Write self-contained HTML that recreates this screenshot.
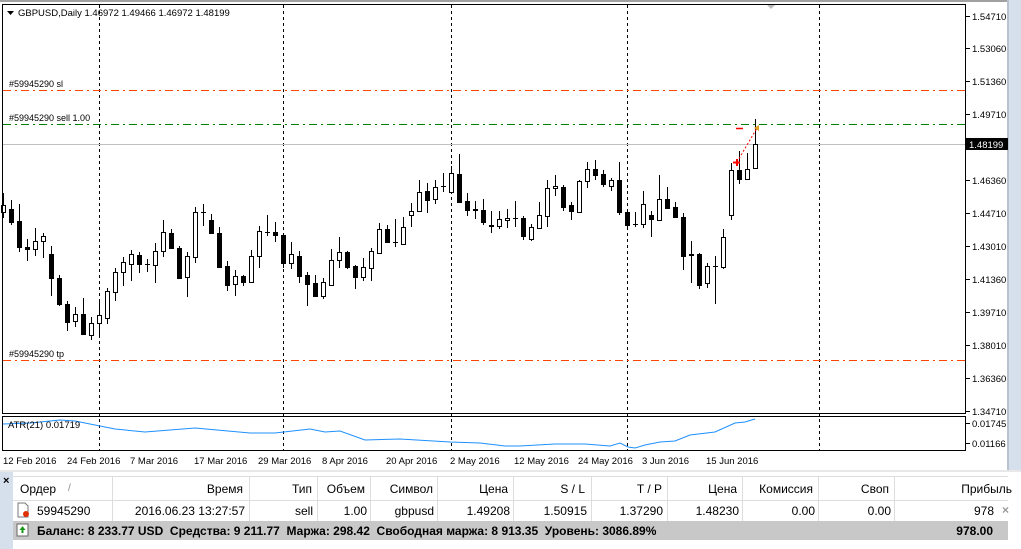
<!DOCTYPE html>
<html><head><meta charset="utf-8"><style>
*{margin:0;padding:0;box-sizing:border-box}
body{width:1021px;height:549px;background:#fff;overflow:hidden;position:relative;font-family:"Liberation Sans","DejaVu Sans",sans-serif}
svg{position:absolute;left:0;top:0}
.t{position:absolute;font-size:12px;color:#000;white-space:nowrap;line-height:14px}
.r{text-align:right}
</style></head><body>
<svg id="c" width="1021" height="472" viewBox="0 0 1021 472" font-family="Liberation Sans, sans-serif">
<rect x="0" y="0" width="1021" height="472" fill="#fff"/>
<rect x="0" y="0" width="1021" height="2" fill="#a0a0a0"/>
<rect x="1008" y="0" width="13" height="472" fill="#d6dfec"/>
<rect x="1007" y="0" width="2" height="472" fill="#b9c3d0"/>
<g id="grid" stroke="#000" stroke-dasharray="3,3" stroke-width="1">
<line x1="99.5" y1="5" x2="99.5" y2="450"/><line x1="283.5" y1="5" x2="283.5" y2="450"/>
<line x1="451.5" y1="5" x2="451.5" y2="450"/><line x1="627.5" y1="5" x2="627.5" y2="450"/>
<line x1="819.5" y1="5" x2="819.5" y2="450"/>
</g>
<line x1="3" y1="90.5" x2="965" y2="90.5" stroke="#ff4500" stroke-dasharray="8,4,2,4"/>
<line x1="3" y1="124.5" x2="965" y2="124.5" stroke="#008000" stroke-dasharray="8,4,2,4"/>
<line x1="3" y1="144.5" x2="965" y2="144.5" stroke="#c0c0c0"/>
<line x1="3" y1="360.5" x2="965" y2="360.5" stroke="#ff4500" stroke-dasharray="8,4,2,4"/>
<text x="9" y="87" font-size="9">#59945290 sl</text>
<text x="9" y="121" font-size="9">#59945290 sell 1.00</text>
<text x="9" y="357" font-size="9">#59945290 tp</text>
<path d="M7 11h7l-3.5 4z" fill="#000"/>
<text x="18" y="16" font-size="9.5">GBPUSD,Daily  1.46972 1.49466 1.46972 1.48199</text>
<path d="M767 5h8l-4 4z" fill="#bbb"/>
<g id="cd"></g>
<line x1="737" y1="162" x2="757" y2="128" stroke="#f00" stroke-dasharray="2,2"/>
<line x1="736" y1="128.5" x2="743" y2="128.5" stroke="#f00" stroke-width="1.5"/>
<path d="M733 162.5h7M737 159v7" stroke="#f00" stroke-width="2"/>
<path d="M754 128l5-3v6z" fill="#e0a020"/>
<rect x="2.5" y="4.5" width="963" height="409" fill="none" stroke="#000"/>
<rect x="2.5" y="416.5" width="963" height="34" fill="none" stroke="#000"/>
<polyline fill="none" stroke="#1e90ff" points="3,424 30,423 60,420 75,421 90,424 115,429 145,432 195,428 250,433 275,433 310,429 325,432 340,431 365,440 400,439 450,442 480,443 505,446 520,446 555,444 585,444 610,446 620,443 628,447 635,448 645,445 660,442 675,441 690,435 715,432 735,423 745,422 755,419"/>
<text x="8" y="428" font-size="9.5">ATR(21) 0.01719</text>
<g id="ax" font-size="9.5"></g>
<rect x="966" y="138" width="42" height="12" fill="#000"/>
<text x="969" y="148" font-size="9.5" fill="#fff">1.48199</text>
<g font-size="9.5">
<text x="3" y="464">12 Feb 2016</text><text x="67" y="464">24 Feb 2016</text><text x="130" y="464">7 Mar 2016</text>
<text x="194" y="464">17 Mar 2016</text><text x="258" y="464">29 Mar 2016</text><text x="322" y="464">8 Apr 2016</text>
<text x="386" y="464">20 Apr 2016</text><text x="450" y="464">2 May 2016</text><text x="514" y="464">12 May 2016</text>
<text x="578" y="464">24 May 2016</text><text x="642" y="464">3 Jun 2016</text><text x="706" y="464">15 Jun 2016</text>
</g>
<rect x="0" y="470" width="1021" height="2" fill="#e8e8e8"/>
</svg>
<div style="position:absolute;left:0;top:472px;width:13px;height:77px;background:#d6dfec"></div>
<div class="t" style="left:3px;top:474px;font-size:11px;font-weight:bold">×</div>
<div style="position:absolute;left:13px;top:476px;width:995px;height:73px;background:#fff;border-top:1px solid #ddd"></div>
<svg width="1021" height="549" style="pointer-events:none">
<g stroke="#ddd">
<line x1="112.5" y1="477" x2="112.5" y2="521"/><line x1="249.5" y1="477" x2="249.5" y2="521"/>
<line x1="317.5" y1="477" x2="317.5" y2="521"/><line x1="370.5" y1="477" x2="370.5" y2="521"/>
<line x1="437.5" y1="477" x2="437.5" y2="521"/><line x1="513.5" y1="477" x2="513.5" y2="521"/>
<line x1="591.5" y1="477" x2="591.5" y2="521"/><line x1="667.5" y1="477" x2="667.5" y2="521"/>
<line x1="742.5" y1="477" x2="742.5" y2="521"/><line x1="818.5" y1="477" x2="818.5" y2="521"/>
<line x1="894.5" y1="477" x2="894.5" y2="521"/>
<line x1="13" y1="500.5" x2="1008" y2="500.5"/>
</g>
<rect x="13" y="521" width="995" height="19" fill="#c8c8c8"/>
<rect x="17" y="524" width="11" height="12" fill="#fff" stroke="#666"/>
<path d="M22.5 526l-3 4h2v3h2v-3h2z" fill="#1a9a1a"/>
<path d="M18 503h7l3 3v11h-10z" fill="#fff" stroke="#777"/>
<circle cx="26" cy="514" r="3" fill="#e03000"/>
</svg>
<div class="t" style="left:20px;top:482px">Ордер</div>
<div class="t" style="left:68px;top:482px;color:#888;font-size:10px">/</div>
<div class="t r" style="left:150px;width:93px;top:482px">Время</div>
<div class="t r" style="left:250px;width:62px;top:482px">Тип</div>
<div class="t r" style="left:300px;width:65px;top:482px">Объем</div>
<div class="t r" style="left:370px;width:63px;top:482px">Символ</div>
<div class="t r" style="left:440px;width:68px;top:482px">Цена</div>
<div class="t r" style="left:520px;width:65px;top:482px">S / L</div>
<div class="t r" style="left:600px;width:62px;top:482px">T / P</div>
<div class="t r" style="left:670px;width:67px;top:482px">Цена</div>
<div class="t r" style="left:740px;width:73px;top:482px">Комиссия</div>
<div class="t r" style="left:820px;width:69px;top:482px">Своп</div>
<div class="t r" style="left:900px;width:112px;top:482px">Прибыль</div>
<div class="t" style="left:37px;top:504px">59945290</div>
<div class="t r" style="left:113px;width:132px;top:504px">2016.06.23 13:27:57</div>
<div class="t r" style="left:250px;width:63px;top:504px">sell</div>
<div class="t r" style="left:300px;width:67px;top:504px">1.00</div>
<div class="t r" style="left:370px;width:64px;top:504px">gbpusd</div>
<div class="t r" style="left:440px;width:70px;top:504px">1.49208</div>
<div class="t r" style="left:520px;width:67px;top:504px">1.50915</div>
<div class="t r" style="left:600px;width:63px;top:504px">1.37290</div>
<div class="t r" style="left:670px;width:69px;top:504px">1.48230</div>
<div class="t r" style="left:740px;width:75px;top:504px">0.00</div>
<div class="t r" style="left:820px;width:71px;top:504px">0.00</div>
<div class="t r" style="left:900px;width:94px;top:504px">978</div>
<div class="t" style="left:1002px;top:503px;color:#999;font-weight:bold">×</div>
<div class="t" style="left:37px;top:524px;font-weight:bold">Баланс: 8 233.77 USD&nbsp; Средства: 9 211.77&nbsp; Маржа: 298.42&nbsp; Свободная маржа: 8 913.35&nbsp; Уровень: 3086.89%</div>
<div class="t r" style="left:900px;width:93px;top:524px;font-weight:bold">978.00</div>
<script>
var D=[[193,218,212,205],[200,225,209,222],[204,252,221,247],[239,261,247,249],[228,256,249,241],[233,258,241,236],[246,296,254,278],[275,306,278,304],[301,331,304,322],[307,327,321,314],[298,335,314,334],[317,340,335,323],[302,336,323,315],[288,324,318,291],[268,301,292,272],[257,286,272,262],[250,281,264,254],[252,273,255,264],[259,272,264,264],[243,283,265,251],[220,257,251,232],[229,249,233,248],[246,279,248,278],[252,297,277,256],[207,263,257,212],[204,226,212,212],[214,234,220,233],[227,268,233,267],[261,291,266,285],[270,296,284,276],[275,286,276,282],[250,282,282,256],[226,268,256,231],[215,236,232,232],[222,242,232,235],[233,268,235,263],[242,269,263,254],[251,283,256,276],[272,306,275,284],[275,297,283,296],[278,299,296,282],[249,286,285,260],[237,268,260,252],[251,269,252,267],[265,289,266,277],[258,281,277,267],[248,281,268,251],[223,253,253,229],[225,243,229,242],[219,247,242,242],[217,244,244,227],[203,227,215,211],[180,212,211,192],[183,213,191,200],[180,204,199,187],[173,192,186,186],[166,192,192,173],[154,202,174,202],[193,216,201,210],[201,219,209,210],[199,225,210,222],[211,233,225,226],[211,229,226,219],[209,228,220,218],[201,227,218,218],[216,240,218,236],[224,241,239,227],[202,228,228,215],[180,227,216,188],[175,196,188,186],[185,211,187,207],[202,220,205,211],[180,213,212,181],[162,188,181,169],[160,180,169,175],[170,187,174,184],[178,191,186,180],[162,215,180,212],[212,227,212,225],[212,227,224,224],[191,228,224,204],[211,237,215,219],[175,220,220,199],[187,208,199,208],[202,217,207,217],[213,270,217,256],[241,283,254,255],[253,289,254,285],[263,288,283,266],[256,304,266,266],[229,269,267,237],[163,220,215,170],[151,184,170,179],[153,179,179,169],[119,168,168,144]];
var s='';D.forEach(function(d,k){var x=3+8*k+.5;s+='<line x1="'+x+'" y1="'+d[0]+'" x2="'+x+'" y2="'+d[1]+'" stroke="#000"/>';var t=Math.min(d[2],d[3]),b=Math.max(d[2],d[3]);
if(b-t<1){s+='<line x1="'+(x-2.5)+'" y1="'+(t+.5)+'" x2="'+(x+2.5)+'" y2="'+(t+.5)+'" stroke="#000"/>';}
else s+='<rect x="'+(x-2)+'" y="'+(t+.5)+'" width="4" height="'+(b-t)+'" fill="'+(d[2]<d[3]?'#000':'#fff')+'" stroke="#000"/>';});
document.getElementById('cd').innerHTML=s;
var P=[['1.54710',16],['1.53060',48],['1.51360',81],['1.49710',114],['1.46360',180],['1.44710',213],['1.43010',246],['1.41360',279],['1.39710',312],['1.38010',345],['1.36360',378],['1.34710',411],['0.01745',423],['0.01166',443]];
var a='';P.forEach(function(p){a+='<line x1="966" y1="'+(p[1]+.5)+'" x2="970" y2="'+(p[1]+.5)+'" stroke="#000"/><text x="972" y="'+(p[1]+4)+'">'+p[0]+'</text>';});
document.getElementById('ax').innerHTML=a;
</script>
</body></html>
